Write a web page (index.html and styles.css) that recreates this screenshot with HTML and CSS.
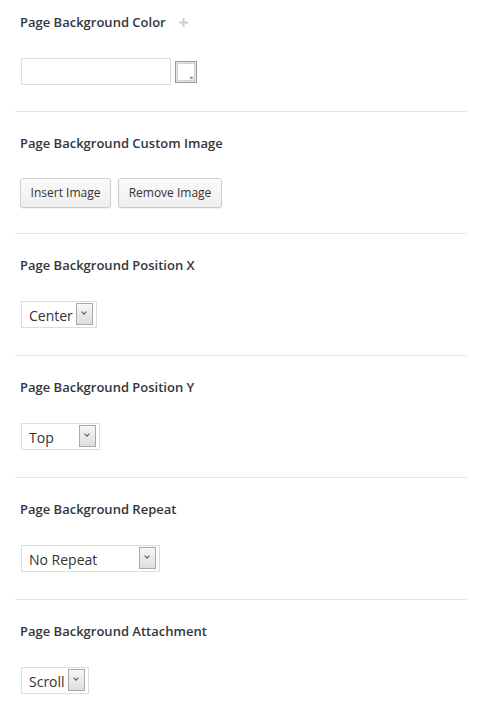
FILE: index.html
```html
<!DOCTYPE html>
<html>
<head>
<meta charset="utf-8">
<link rel="stylesheet" href="styles.css">
</head>
<body>
<div class="panel">
  <div class="field first">
    <div class="label">Page Background Color <span class="plus"><svg width="9" height="9" viewBox="0 0 9 9"><rect x="3.5" y="0" width="2" height="9" fill="#cfcfcf"/><rect x="0" y="3.5" width="9" height="2" fill="#cfcfcf"/></svg></span></div>
    <div class="control color-row">
      <input class="color-input" type="text" value="">
      <span class="picker"><svg width="22" height="22" viewBox="0 0 22 22"><rect x="0.5" y="0.5" width="21" height="21" fill="#e6e6e6" stroke="#9a9a9a"/><rect x="2.5" y="2.5" width="17" height="17" fill="#fff" stroke="#cfcfcf"/><rect x="14" y="15" width="5" height="4" fill="#e8e8e8"/><path d="M15 16 L18 16 L16.5 18 Z" fill="#777"/></svg></span>
    </div>
  </div>
  <div class="field buttons-field">
    <div class="label">Page Background Custom Image</div>
    <div class="control buttons">
      <button class="btn btn-insert">Insert Image</button>
      <button class="btn btn-remove">Remove Image</button>
    </div>
  </div>
  <div class="field">
    <div class="label">Page Background Position X</div>
    <div class="control">
      <span class="select w-center"><select><option>Center</option></select><span class="arrow"></span></span>
    </div>
  </div>
  <div class="field">
    <div class="label">Page Background Position Y</div>
    <div class="control">
      <span class="select w-top"><select><option>Top</option></select><span class="arrow"></span></span>
    </div>
  </div>
  <div class="field">
    <div class="label">Page Background Repeat</div>
    <div class="control">
      <span class="select w-repeat"><select><option>No Repeat</option></select><span class="arrow"></span></span>
    </div>
  </div>
  <div class="field">
    <div class="label">Page Background Attachment</div>
    <div class="control">
      <span class="select w-scroll"><select><option>Scroll</option></select><span class="arrow"></span></span>
    </div>
  </div>
</div>
</body>
</html>
```

FILE: styles.css
```css
html, body {
  margin: 0;
  padding: 0;
  background: #fff;
}

body {
  font-family: "Open Sans", "Noto Sans", sans-serif;
  color: #23282d;
}

.panel {
  margin: 0 16px 0 15px;
}

.field {
  padding: 21px 0 27px 5px;
  border-bottom: 1px solid #e5e5e5;
}

.field.first {
  padding-top: 12px;
  padding-bottom: 26px;
}

.field.buttons-field {
  padding-bottom: 25px;
}

.label {
  font-size: 13px;
  font-weight: 600;
  line-height: 20px;
  height: 20px;
  display: flex;
  align-items: center;
  color: #32373c;
}

.plus {
  display: inline-flex;
  margin-left: 13px;
}

.control {
  margin-top: 26px;
  display: flex;
  align-items: center;
}

.color-row {
  gap: 4px;
}

.color-input {
  margin: 0 0 0 1px;
  width: 150px;
  height: 27px;
  box-sizing: border-box;
  border: 1px solid #dddddd;
  padding: 0 6px;
  font: 14px "Open Sans", sans-serif;
  outline: none;
}

.picker {
  display: inline-flex;
  width: 22px;
  height: 22px;
  margin-top: 1px;
}

.buttons {
  gap: 7px;
  margin-top: 25px;
}

.btn {
  height: 30px;
  box-sizing: border-box;
  border: 1px solid #cccccc;
  border-radius: 3px;
  background: linear-gradient(#fafafa, #efefef);
  box-shadow: inset 0 1px 0 #fff, 0 1px 0 rgba(0,0,0,0.06);
  font: 12px "Open Sans", sans-serif;
  color: #333;
  padding: 0 0 1px;
  margin: 0;
  white-space: nowrap;
}

.btn-insert { width: 91px; }
.btn-remove { width: 104px; }

.select {
  margin-left: 1px;
  display: inline-flex;
  align-items: flex-start;
  height: 27px;
  box-sizing: border-box;
  border: 1px solid #dddddd;
  background: #fff;
  padding: 1px 3px 0 0;
}

.select select {
  appearance: none;
  -webkit-appearance: none;
  border: 0;
  background: transparent;
  font: 14px "Open Sans", sans-serif;
  color: #333;
  padding: 1px 0 0 7px;
  margin: 0;
  height: 24px;
  line-height: 23px;
  flex: 1;
  min-width: 0;
  outline: none;
}

.arrow {
  width: 17px;
  height: 22px;
  box-sizing: border-box;
  border: 1px solid #a9a9a9;
  background: linear-gradient(#f6f6f6, #dedede);
  position: relative;
  flex: none;
}

.arrow::after {
  content: "";
  position: absolute;
  left: 5px;
  top: 6px;
  width: 3px;
  height: 3px;
  border-right: 1.5px solid #555;
  border-bottom: 1.5px solid #555;
  transform: rotate(45deg);
}

.w-center { width: 76px; }
.w-top { width: 79px; }
.w-repeat { width: 139px; }
.w-scroll { width: 68px; }
```
